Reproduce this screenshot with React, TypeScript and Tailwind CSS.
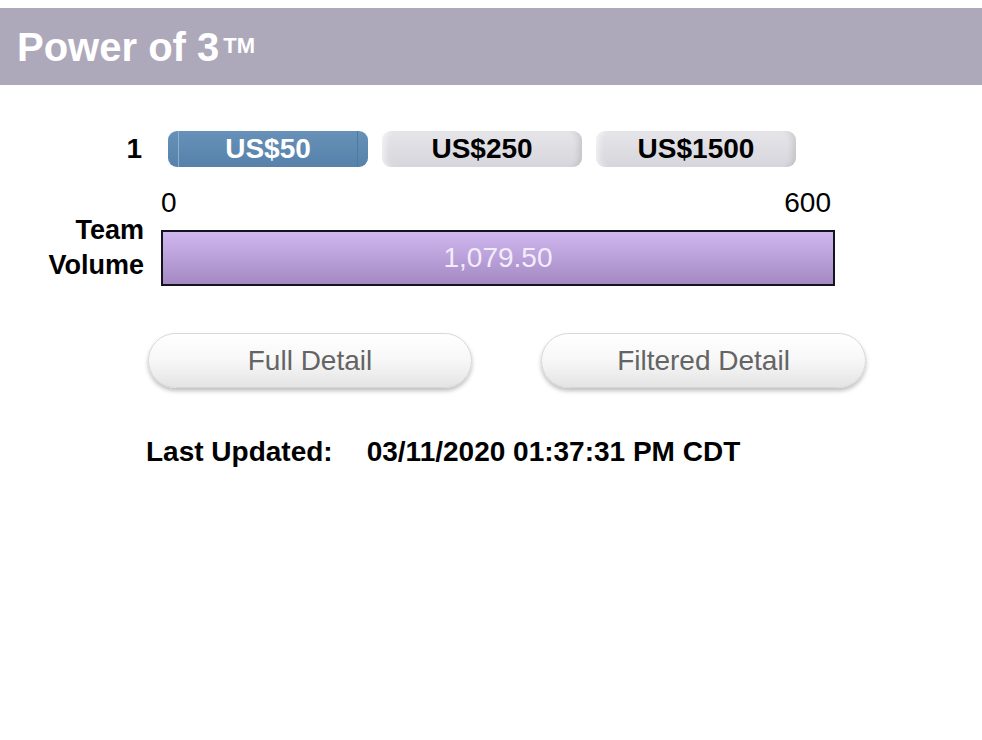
const font = { fontFamily: '"Liberation Sans", Arial, sans-serif' }

const tabs = [
    { label: 'US$50', active: true },
    { label: 'US$250', active: false },
    { label: 'US$1500', active: false },
]

const Tab = ({ label, active }: { label: string; active: boolean }) => {
    if (active) {
        return (
            <div className="relative w-[200px] h-[36px] rounded-[9px] bg-gradient-to-b from-[#6791b8] to-[#5681aa] flex items-center justify-center text-white font-bold text-[28px] leading-none">
                <span className="absolute left-[10px] top-0 bottom-0 w-px bg-[#8fb0cf]" />
                <span className="absolute right-[10px] top-0 bottom-0 w-px bg-[#5079a0]" />
                {label}
            </div>
        )
    }
    return (
        <div className="relative w-[200px] h-[36px] rounded-[9px] bg-gradient-to-b from-[#e6e5ea] to-[#d7d6dc] flex items-center justify-center text-black font-bold text-[28px] leading-none shadow-[inset_-6px_0_6px_-3px_rgba(0,0,0,0.12),inset_6px_0_6px_-3px_rgba(255,255,255,0.6)]">
            {label}
        </div>
    )
}

const PillButton = ({ label, width }: { label: string; width: string }) => (
    <button
        className={`${width} h-[55px] rounded-full bg-gradient-to-b from-[#ffffff] via-[#f7f7f7] to-[#e4e4e4] border border-[#d8d8d8] shadow-[0_3px_4px_rgba(0,0,0,0.25)] text-[#646464] text-[28px] leading-none`}
    >
        {label}
    </button>
)

export default function App() {
    return (
        <div className="bg-white w-[982px] h-[740px] overflow-hidden text-black" style={font}>

            {/* header */}
            <div className="mt-[8px] h-[77px] bg-[#aea9ba] flex items-center pl-[17px]">
                <h1 className="text-white font-bold text-[40px] leading-none flex items-start">
                    Power of 3
                    <span className="ml-[4px] mt-[8px] text-[22px] leading-none">TM</span>
                </h1>
            </div>

            {/* tabs */}
            <div className="mt-[46px] flex items-center">
                <div className="w-[144px] pr-[2px] text-right font-bold text-[28px] leading-none">1</div>
                <div className="ml-[24px] flex gap-[14px]">
                    {tabs.map((t) => (
                        <Tab key={t.label} label={t.label} active={t.active} />
                    ))}
                </div>
            </div>

            {/* team volume bar */}
            <div className="mt-[20px] flex">
                <div className="w-[144px] pt-[26px] text-right font-bold text-[27px] leading-[35px]">
                    Team
                    <br />
                    Volume
                </div>
                <div className="ml-[17px] flex flex-col w-[674px]">
                    <div className="h-[32px] flex justify-between text-[28px] leading-[32px] pr-[4px]">
                        <span>0</span>
                        <span>600</span>
                    </div>
                    <div className="mt-[11px] h-[56px] border-2 border-[#151320] bg-gradient-to-b from-[#d0b8ef] to-[#a489c3] flex items-center justify-center text-[#f3ecfb] text-[28px] leading-none">
                        1,079.50
                    </div>
                </div>
            </div>

            {/* detail buttons */}
            <div className="mt-[47px] ml-[148px] flex gap-[69px]">
                <PillButton label="Full Detail" width="w-[324px]" />
                <PillButton label="Filtered Detail" width="w-[325px]" />
            </div>

            {/* last updated */}
            <div className="mt-[48px] ml-[146px] flex gap-[34px] font-bold text-[28px] leading-[32px]">
                <span>Last Updated:</span>
                <span>03/11/2020 01:37:31 PM CDT</span>
            </div>
        </div>
    )
}
